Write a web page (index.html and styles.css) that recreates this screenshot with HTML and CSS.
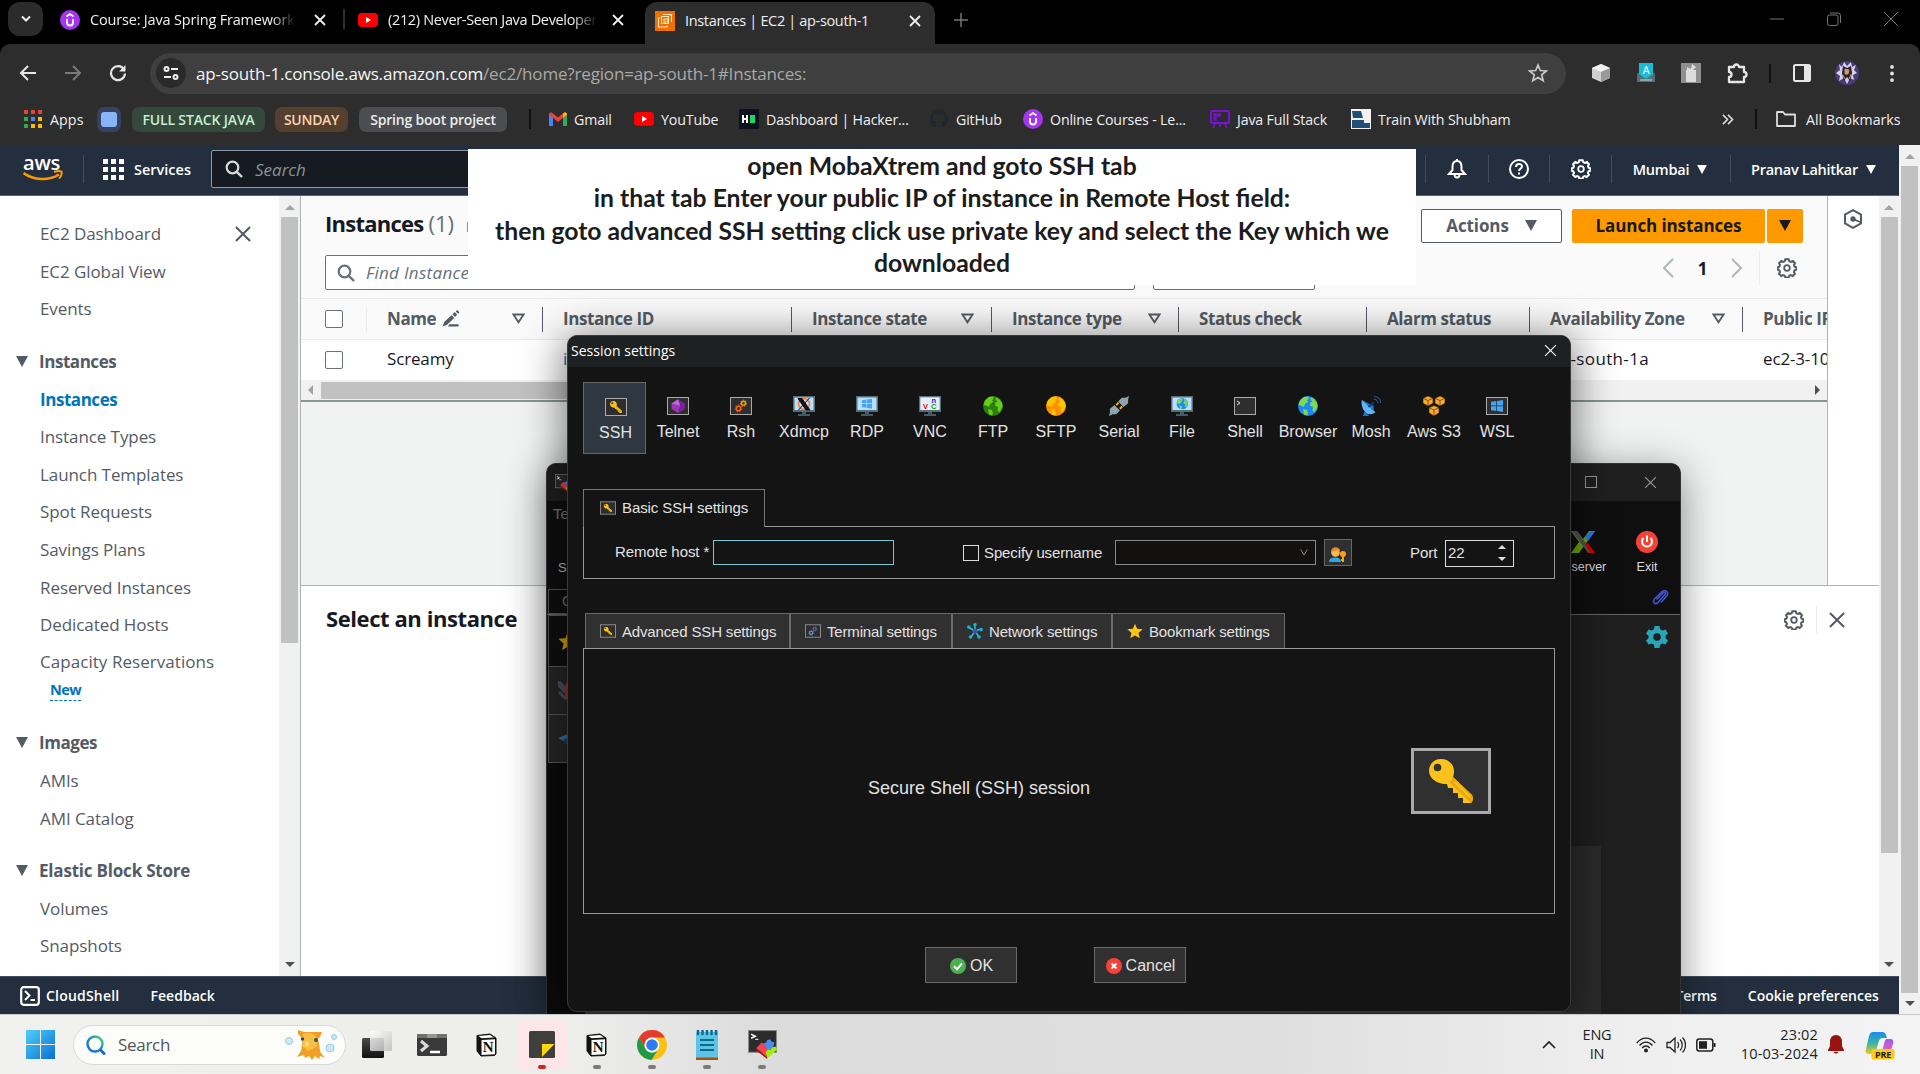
FILE: index.html
```html
<!DOCTYPE html>
<html lang="en">
<head>
<meta charset="utf-8">
<title>Instances | EC2 | ap-south-1</title>
<link rel="stylesheet" href="styles.css">
</head>
<body>
<svg class="defs" aria-hidden="true">
  <defs>
    <linearGradient id="g-win" x1="0" y1="0" x2="1" y2="1"><stop offset="0" stop-color="#4fd0fb"/><stop offset="1" stop-color="#0a6fd0"/></linearGradient>
    <linearGradient id="g-lens" x1="0" y1="1" x2="1" y2="0"><stop offset="0" stop-color="#1667d8"/><stop offset=".6" stop-color="#1499c9"/><stop offset="1" stop-color="#5bd66a"/></linearGradient>
    <linearGradient id="g-cop1" x1="0" y1="0" x2="0" y2="1"><stop offset="0" stop-color="#1b8df0"/><stop offset=".5" stop-color="#35b5a5"/><stop offset="1" stop-color="#f4c91b"/></linearGradient>
    <linearGradient id="g-cop2" x1="0" y1="0" x2="0" y2="1"><stop offset="0" stop-color="#9a5cf5"/><stop offset=".6" stop-color="#e45fb0"/><stop offset="1" stop-color="#ff8a4c"/></linearGradient>
    <linearGradient id="g-glass" x1="0" y1="0" x2="1" y2="1"><stop offset="0" stop-color="#fff"/><stop offset="1" stop-color="#bdbdbd"/></linearGradient>
    <linearGradient id="g-dark" x1="0" y1="0" x2="0" y2="1"><stop offset="0" stop-color="#4a4a4a"/><stop offset="1" stop-color="#111"/></linearGradient>
  </defs>
  <symbol id="x" viewBox="0 0 12 12"><path d="M1 1l10 10M11 1L1 11" stroke="currentColor" fill="none"/></symbol>
  <symbol id="udemy" viewBox="0 0 20 20"><circle cx="10" cy="10" r="10" fill="#a435f0"/><path d="M6.500 6.500L10 4l3.500 2.500M7 9v3.500a3 3 0 0 0 6 0V9" stroke="#fff" stroke-width="1.800" fill="none"/></symbol>
  <symbol id="yt" viewBox="0 0 20 20"><rect y="3" width="20" height="14" rx="4" fill="#f00"/><path d="M8 7v6l5-3z" fill="#fff"/></symbol>
  <symbol id="search" viewBox="0 0 18 18"><circle cx="7.500" cy="7.500" r="5.800" fill="none" stroke="currentColor" stroke-width="2.200"/><path d="M11.800 11.800L17 17" stroke="currentColor" stroke-width="2.400"/></symbol>
  <symbol id="gear" viewBox="0 0 20 20"><path d="M8.300 1.300h3.400l.6 2 1.700.7 1.900-1 2.100 2.200-1 1.900.6 1.600 1.700.6v2.400l-1.700.6-.7 1.700 1 1.900-2.200 2.100-1.900-1-1.500.7-.6 1.900H8.300l-.6-1.900-1.600-.7-1.900 1L2 15.900 3 14l-.7-1.700-1.600-.6V9.300l1.700-.6L3 7.100 2 5.200 4.200 3l1.900 1 1.600-.7z" fill="none" stroke="currentColor" stroke-width="2"/><circle cx="10" cy="10" r="2.800" fill="none" stroke="currentColor" stroke-width="1.800"/></symbol>
  <symbol id="dn" viewBox="0 0 12 11"><path d="M0 0h12L6 11z" fill="currentColor"/></symbol>
  <symbol id="sort" viewBox="0 0 14 11"><path d="M1.500 1.200h11L7 9.500z" fill="none" stroke="currentColor" stroke-width="2"/></symbol>
  <symbol id="key" viewBox="0 0 44 44"><path d="M12 0C19 0 25 5 25 12c0 3-.5 5-1 6L43 36c1.500 3 1 6-1 8h-8v-5h-5v-5h-5v-5h-5l-1-4C10 26 0 20 0 12 0 5 5 0 12 0z" fill="#fcc21c"/><path d="M24 18l19 18c1.500 3 1 6-1 8L21 24z" fill="#e9a80f"/><path d="M26 23l15 15" stroke="#fcc21c" stroke-width="2"/><circle cx="8.500" cy="8.500" r="3.800" fill="#323232"/></symbol>
  <symbol id="framekey" viewBox="0 0 22 18"><rect x=".5" y=".5" width="21" height="17" fill="#2e2e2e" stroke="#aaa"/><use href="#key" x="5" y="3" width="12" height="12"/></symbol>
  <symbol id="cogs" viewBox="0 0 22 18"><rect x=".5" y=".5" width="21" height="17" fill="#2e2e2e" stroke="#aaa"/><g fill="none" stroke="currentColor"><circle cx="8.500" cy="11.500" r="2.200" stroke-width="1.600"/><circle cx="8.500" cy="11.500" r="3.400" stroke-dasharray="1.500 1.500"/></g><g fill="none" stroke="var(--cog2,#ffa000)"><circle cx="13.500" cy="6.200" r="1.900" stroke-width="1.400"/><circle cx="13.500" cy="6.200" r="3" stroke-dasharray="1.300 1.300"/></g></symbol>
  <symbol id="monitor" viewBox="0 0 22 20"><rect width="22" height="16" fill="#546e7a"/><rect x="1.500" y="1.500" width="19" height="12.500" fill="#bbdefb"/><path d="M9 16h4v2h4v2H5v-2h4z" fill="#455a64"/></symbol>
  <symbol id="winlogo" viewBox="0 0 12 12"><path d="M0 1.800L5.300 1v4.600H0zM6 .9L12 0v5.600H6zM0 6.300h5.300V11L0 10.200zM6 6.300h6V12l-6-.9z" fill="#42a5f5"/></symbol>
  <symbol id="globe" viewBox="0 0 20 20"><circle cx="10" cy="10" r="10" fill="var(--sea)"/><path d="M2 4.500l4-3.500 4-.5 1 2-2 1.500 1 2-3 2-1 3-3-1.500-2.500-.5zM13 1.500l3 1.500 3 4 .5 4-3 5-2-1 .5-4-3-1.500.5-3 2-1-2-2zM5 13l4 1 1 3-1 2.500-3-1z" fill="var(--land)"/></symbol>
  <symbol id="star" viewBox="0 0 20 20"><path d="M10 .8l2.700 6.400 6.900.6-5.200 4.600 1.500 6.800L10 15.600l-5.900 3.600 1.500-6.800L.4 7.800l6.900-.6z" fill="currentColor"/></symbol>
  <symbol id="notion" viewBox="0 0 22 24"><path d="M1 2.500L14 1l6 4v16l-1.500 1.500L5 23l-4-5z" fill="#111" stroke="#111"/><path d="M2.500 3L14 2l4 2.500L5.500 5.300z" fill="#fff"/><path d="M5.500 7L19 6.200V21.300L5.500 22z" fill="#fff"/><text x="12.200" y="19" text-anchor="middle" font-family="Liberation Serif,serif" font-weight="700" font-size="15" fill="#111">N</text></symbol>
  <symbol id="moba" viewBox="0 0 28 28"><rect x=".5" y=".5" width="27" height="21" fill="#2c2c2c" stroke="#8a8a8a"/><path d="M3 4l4 2-4 2" stroke="#fff" stroke-width="1.500" fill="none"/><path d="M7 9h3" stroke="#fff"/><path d="M8 17.500L13 12l3 2 2 2 3 4-2.500 6z" fill="#f4444d"/><path d="M14.500 13l3-1 1-2 3-1 1 2 3 1-1 4-4 4-2-1-1-3z" fill="#4b8df0"/><path d="M17 22l2-3 3 0 1-2 4-1 1 3-9 8z" fill="#9ff000"/><path d="M8 17.500l10.500 8.500v2L8 20z" fill="#a01824"/></symbol>
</svg>

<div class="browser">
  <div class="tabstrip">
    <div class="tabmenu"><svg width="12" height="8" viewBox="0 0 12 8"><path d="M2 1.500l4 4 4-4" stroke="#eee" stroke-width="2" fill="none"/></svg></div>
    <div class="tab tab1"><svg class="i20"><use href="#udemy"/></svg><span class="tabtext fade">Course: Java Spring Framework</span><svg class="i12"><use href="#x"/></svg></div>
    <i class="tabsep"></i>
    <div class="tab tab2"><svg class="i20"><use href="#yt"/></svg><span class="tabtext fade">(212) Never-Seen Java Developer</span><svg class="i12"><use href="#x"/></svg></div>
    <div class="tab tab3"><svg class="i20" viewBox="0 0 20 20"><rect width="20" height="20" fill="#ed7100"/><path d="M5 7H3.500v9H12v-1.500M6.500 5.500h7v7h-7zM9 8h3.500v3H9zM15 4h1.500v7M8 3.500h8.500" stroke="#ffe3c4" stroke-width="1.100" fill="none"/></svg><span class="tabtext">Instances | EC2 | ap-south-1</span><svg class="i12"><use href="#x"/></svg></div>
    <svg class="newtab" width="14" height="14" viewBox="0 0 14 14"><path d="M7 0v14M0 7h14" stroke="#777" stroke-width="1.500"/></svg>
    <div class="winctl">
      <svg width="14" height="14" viewBox="0 0 14 14"><path d="M0 7h14" stroke="#777"/></svg>
      <svg width="14" height="14" viewBox="0 0 14 14"><rect x=".5" y="3" width="10.500" height="10.500" rx="2" fill="none" stroke="#777"/><path d="M3 1h8a2.500 2.500 0 0 1 2.500 2.500v7.500" fill="none" stroke="#777"/></svg>
      <svg width="14" height="14" viewBox="0 0 14 14"><path d="M0 0l14 14M14 0L0 14" stroke="#777"/></svg>
    </div>
  </div>
  <div class="toolbar">
    <svg class="nav" viewBox="0 0 18 18"><path d="M17 9H2M9 2L2 9l7 7" stroke="#e6e6e6" stroke-width="2" fill="none"/></svg>
    <svg class="nav" viewBox="0 0 18 18"><path d="M1 9h15M9 2l7 7-7 7" stroke="#7a7a7a" stroke-width="2" fill="none"/></svg>
    <svg class="nav" viewBox="0 0 18 18"><path d="M15 5.500A7 7 0 1 0 16 9.500" stroke="#e6e6e6" stroke-width="2.200" fill="none"/><path d="M16.500 1v6.500H10z" fill="#e6e6e6"/></svg>
    <div class="omnibox">
      <span class="site"><svg width="16" height="16" viewBox="0 0 16 16"><g fill="none" stroke="#eee" stroke-width="2"><circle cx="3.500" cy="4" r="2"/><path d="M8 4h7M1 12h7"/><circle cx="12.500" cy="12" r="2"/></g></svg></span>
      <span class="url"><b>ap-south-1.console.aws.amazon.com</b>/ec2/home?region=ap-south-1#Instances:</span>
      <svg class="bm" viewBox="0 0 20 20"><path d="M10 2l2.300 5.500 6 .5-4.600 3.900 1.500 5.900L10 14.600l-5.200 3.200 1.500-5.900L1.700 8l6-.5z" stroke="#c8c8c8" stroke-width="1.700" fill="none"/></svg>
    </div>
    <div class="ext">
      <svg class="i20" viewBox="0 0 20 20"><path d="M10 1l9 4v10l-9 4-9-4V5z" fill="#cfcfcf"/><path d="M10 1l9 4-9 4-9-4z" fill="#f0f0f0"/><path d="M10 9l9-4v10l-9 4z" fill="#9a9a9a"/></svg>
      <svg class="i20" viewBox="0 0 20 20"><rect x="1" y="10" width="18" height="9" rx="1" fill="#546e7a"/><path d="M3 0h14v11l-7 5-7-5z" fill="#16bcd8"/><text x="10" y="10.500" text-anchor="middle" font-family="Liberation Sans,sans-serif" font-size="10" fill="#fff">A</text><path d="M4 17h12" stroke="#cfd8dc"/></svg>
      <svg class="i20" viewBox="0 0 20 20"><rect width="20" height="20" fill="#8f8f8f"/><path d="M5 7h10v12H5zM6 4l4 2 1-5 4 3-3 3H6z" fill="#ddd"/></svg>
      <svg class="i22" viewBox="0 0 22 22"><path d="M3 5h5a2.500 2.500 0 0 1 5 0h5v5a2.500 2.500 0 0 1 0 5v5H3v-5a2.500 2.500 0 0 0 0-5z" stroke="#e6e6e6" stroke-width="2.300" stroke-linejoin="round" fill="none"/></svg>
      <i class="bar"></i>
      <svg class="i20 side" viewBox="0 0 20 20"><rect x="2" y="2" width="16" height="16" rx="1.500" stroke="#e6e6e6" stroke-width="2" fill="none"/><path d="M12 2h6v16h-6z" fill="#e6e6e6"/></svg>
      <svg class="i24" viewBox="0 0 24 24"><circle cx="12" cy="12" r="12" fill="#4a3c78"/><path d="M4 3l3 3 2-5 3 4 4-4 1 5 4-2-2 5 3 3-4 2 1 5-4-2-3 6-3-6-5 3 1-5-4-3 4-3z" fill="#d8cfe6"/><path d="M8 5l4 2 4-2 1 7-2 8-3-4-3 4-2-8z" fill="#23203a"/><path d="M10 8l4 1-1 4-3 0zM8 14l2 4M16 13l-2 5" fill="#d39a5c" stroke="#d39a5c"/></svg>
      <svg class="dots" viewBox="0 0 4 18"><g fill="#e6e6e6"><circle cx="2" cy="2" r="2"/><circle cx="2" cy="9" r="2"/><circle cx="2" cy="16" r="2"/></g></svg>
    </div>
  </div>
  <div class="bookmarks">
    <span class="bk apps-bk"><svg class="i18" viewBox="0 0 18 18"><g><path d="M0 0h4v4H0zM7 0h4v4H7zM14 0h4v4h-4z" fill="#ea4335"/><path d="M0 7h4v4H0zM0 14h4v4H0z" fill="#34a853"/><path d="M7 7h4v4H7z" fill="#4285f4"/><path d="M14 7h4v4h-4zM14 14h4v4h-4zM7 14h4v4H7z" fill="#fbbc05"/></g></svg>Apps</span>
    <span class="chip cblue"><i></i></span>
    <span class="chip cgreen">FULL STACK JAVA</span>
    <span class="chip cbrown">SUNDAY</span>
    <span class="chip cgray">Spring boot project</span>
    <i class="bar"></i>
    <span class="bk"><svg class="i18" viewBox="0 0 18 14"><path d="M0 1v13h4V6z" fill="#4285f4"/><path d="M18 1v13h-4V6z" fill="#34a853"/><path d="M0 2.500C0 .5 2 0 3.500 1L9 5.500 14.500 1C16 0 18 .5 18 2.500L9 10z" fill="#ea4335"/><path d="M14 1.300l1-.6C17 0 18 1 18 2.500L14 6z" fill="#fbbc04"/></svg>Gmail</span>
    <span class="bk"><svg class="i20"><use href="#yt"/></svg>YouTube</span>
    <span class="bk"><svg class="i20" viewBox="0 0 20 20"><rect width="20" height="20" fill="#0b1220"/><path d="M4 6v8M8 6v8M4 10h4" stroke="#fff" stroke-width="2"/><path d="M11 6h5v8h-5z" fill="#1ed760"/></svg>Dashboard | Hacker...</span>
    <span class="bk"><svg class="i20" viewBox="0 0 20 20"><path d="M10 1a9 9 0 0 0-3 17.500V15c-2 .5-3-1-3.500-2 2 .5 2 1.500 3.500 1 0-1 .5-1.200.5-1.500C3 12 3.500 7 5 6V3.500L7.500 5h5L15 3.500V6c1.500 1 2 6-2.500 6.500.5.500.5 1 .5 2v4A9 9 0 0 0 10 1z" fill="#20262e"/></svg>GitHub</span>
    <span class="bk"><svg class="i20"><use href="#udemy"/></svg>Online Courses - Le...</span>
    <span class="bk"><svg class="i20" viewBox="0 0 20 20"><rect x="1" y="2" width="18" height="12" rx="1" fill="none" stroke="#7a12d4" stroke-width="2"/><path d="M4 5h2v2H4zM8 5h2v2H8zM4 9h2v2H4zM5 15l-2 4M10 15v3M15 15l2 4" fill="#7a12d4" stroke="#7a12d4" stroke-width="1.500"/></svg>Java Full Stack</span>
    <span class="bk"><svg class="i20" viewBox="0 0 20 20"><rect width="20" height="20" fill="#f2f2f2"/><path d="M1 2h9l2 7H2zM1 11h12v8H1zM13 14h6v5h-6z" fill="#1f4e79"/></svg>Train With Shubham</span>
    <svg class="more" viewBox="0 0 12 12"><path d="M1 1l5 5-5 5M6.500 1l5 5-5 5" stroke="#ddd" stroke-width="1.700" fill="none"/></svg>
    <i class="bar"></i>
    <span class="bk all-bk"><svg class="i20" viewBox="0 0 20 20"><path d="M1 3h6l2 2.500h10V17H1z" fill="none" stroke="#ddd" stroke-width="1.800" stroke-linejoin="round"/></svg>All Bookmarks</span>
  </div>

  <div class="page">
    <div class="console">
      <header class="awsbar">
        <svg class="aws" viewBox="0 0 40 26"><text x="0" y="13.500" font-family="Open Sans,sans-serif" font-weight="600" font-size="19" textLength="37" lengthAdjust="spacingAndGlyphs" fill="#fff">aws</text><path d="M.5 17c10 7.500 25 8 35.500 1.500" stroke="#f90" stroke-width="2.600" fill="none"/><path d="M31 16c3-1 6-1.200 7.500-.4 .6 2-.5 5-2.500 7" stroke="#f90" stroke-width="2" fill="none"/></svg>
        <i class="sep"></i>
        <svg class="grid9" viewBox="0 0 21 21"><path d="M0 0h5v5H0zM8 0h5v5H8zM16 0h5v5h-5zM0 8h5v5H0zM8 8h5v5H8zM16 8h5v5h-5zM0 16h5v5H0zM8 16h5v5H8zM16 16h5v5h-5z" fill="#fff"/></svg>
        <span class="services">Services</span>
        <div class="awssearch"><svg class="i18"><use href="#search"/></svg><em>Search</em></div>
        <div class="awsright">
          <span class="cell"><svg class="i20" viewBox="0 0 20 20"><path d="M10 2C6.500 2 5.500 5 5.500 8v3L2 15h16l-3.500-4V8c0-3-1-6-4.500-6zM10 0v2M7.500 15.500c0 4 5 4 5 0" stroke="#fff" stroke-width="2" fill="none"/></svg></span>
          <span class="cell"><svg class="i20" viewBox="0 0 20 20"><circle cx="10" cy="10" r="9" stroke="#fff" stroke-width="2" fill="none"/><path d="M7 8c0-4 6-4 6-.5 0 2-3 2-3 4.500M10 13.500v2" stroke="#fff" stroke-width="2" fill="none"/></svg></span>
          <span class="cell"><svg class="i20"><use href="#gear"/></svg></span>
          <span class="cell region">Mumbai <svg class="i10"><use href="#dn"/></svg></span>
          <span class="cell user">Pranav Lahitkar <svg class="i10"><use href="#dn"/></svg></span>
        </div>
      </header>
      <div class="work">
        <nav class="side-nav">
          <div class="links">
            <a>EC2 Dashboard<svg class="closenav" viewBox="0 0 12 12"><path d="M.7.7l10.600 10.600M11.300.7L.7 11.300" stroke="currentColor" stroke-width="1.500"/></svg></a>
            <a>EC2 Global View</a>
            <a>Events</a>
            <h4><svg class="i12b"><use href="#dn"/></svg>Instances</h4>
            <a class="cur">Instances</a>
            <a>Instance Types</a>
            <a>Launch Templates</a>
            <a>Spot Requests</a>
            <a>Savings Plans</a>
            <a>Reserved Instances</a>
            <a>Dedicated Hosts</a>
            <a class="cap">Capacity Reservations</a>
            <div class="new"><span>New</span></div>
            <h4 class="h-img"><svg class="i12b"><use href="#dn"/></svg>Images</h4>
            <a>AMIs</a>
            <a>AMI Catalog</a>
            <h4 class="h-ebs"><svg class="i12b"><use href="#dn"/></svg>Elastic Block Store</h4>
            <a>Volumes</a>
            <a>Snapshots</a>
          </div>
          <div class="vscroll navscroll"><i class="up"></i><b></b><i class="down"></i></div>
        </nav>
        <main>
          <div class="top">
            <section class="list">
              <div class="listhead">
                <div class="row1">
                  <h2>Instances <span>(1)</span></h2><span class="info">Info</span>
                  <div class="btns"><span class="btn">Actions<svg class="i12b"><use href="#dn"/></svg></span><span class="btn launch">Launch instances</span><span class="btn caret"><svg class="i12b"><use href="#dn"/></svg></span></div>
                </div>
                <div class="row2">
                  <div class="find"><svg class="i18"><use href="#search"/></svg><em>Find Instance by attribute or tag</em></div>
                  <div class="state"></div>
                  <div class="pager">
                    <svg width="12" height="20" viewBox="0 0 12 20"><path d="M11 1L2 10l9 9" stroke="#aab7b8" stroke-width="2" fill="none"/></svg>
                    <b>1</b>
                    <svg width="12" height="20" viewBox="0 0 12 20"><path d="M1 1l9 9-9 9" stroke="#aab7b8" stroke-width="2" fill="none"/></svg>
                    <span class="pg"><svg class="i20"><use href="#gear"/></svg></span>
                  </div>
                </div>
              </div>
              <div class="tr th">
                <span class="light"><i class="cb"></i></span>
                <span>Name <svg class="pencil" viewBox="0 0 18 18"><path d="M0 17.500l2-5 7.500-7 3 3-8 7.500zM10.500 4.500L13 2l2.500 3-2.200 2.300zM14 1.500L15.500 0 18 2.500 16.500 4zM7 15h10v2.500H6z" fill="currentColor"/></svg><svg class="srt"><use href="#sort"/></svg></span>
                <span>Instance ID</span>
                <span>Instance state<svg class="srt"><use href="#sort"/></svg></span>
                <span>Instance type<svg class="srt"><use href="#sort"/></svg></span>
                <span>Status check</span>
                <span>Alarm status</span>
                <span>Availability Zone<svg class="srt"><use href="#sort"/></svg></span>
                <span>Public IPv4</span>
              </div>
              <div class="tr td">
                <span><i class="cb"></i></span>
                <span>Screamy</span><span class="lnk">i-0a</span><span></span><span></span><span></span><span></span><span class="az">ap-south-1a</span><span>ec2-3-108</span>
              </div>
              <div class="hscroll"><i class="left"></i><b></b><i class="right"></i></div>
              <div class="blank"></div>
            </section>
            <aside class="rail"><svg width="20" height="20" viewBox="0 0 20 20"><path d="M10 1.200l8 4.400v8.800l-8 4.400-8-4.400V5.600z" stroke="#545b64" stroke-width="2" fill="none"/><circle cx="10" cy="10" r="2.700" fill="#545b64"/><path d="M10 10l7 3" stroke="#545b64" stroke-width="1.800"/></svg></aside>
          </div>
          <section class="detail"><h2>Select an instance</h2><div class="dt"><svg class="i20"><use href="#gear"/></svg><i></i><svg class="xx" viewBox="0 0 12 12"><path d="M.7.7l10.600 10.600M11.300.7L.7 11.300" stroke="currentColor" stroke-width="1.500"/></svg></div></section>
        </main>
        <div class="vscroll mainscroll"><i class="up"></i><b></b><i class="down"></i></div>
      </div>
      <footer class="awsfoot">
        <svg width="20" height="20" viewBox="0 0 20 20"><rect x="1.200" y="1.200" width="17.600" height="17.600" rx="2.500" stroke="#fff" stroke-width="2.200" fill="none"/><path d="M5 5l4.500 4.500L5 14M10.500 14H15" stroke="#fff" stroke-width="2" fill="none"/></svg>
        <span class="cs">CloudShell</span><span>Feedback</span><span class="terms">Terms</span><span>Cookie preferences</span>
      </footer>
    </div>
    <div class="vscroll pagescroll"><i class="up"></i><b></b><i class="down"></i></div>
  </div>

  <div class="taskbar">
    <svg class="start" viewBox="0 0 29 29"><path d="M0 0h14v14H0zM15 0h14v14H15zM0 15h14v14H0zM15 15h14v14H15z" fill="url(#g-win)"/></svg>
    <div class="tsearch"><svg width="20" height="20" viewBox="0 0 20 20"><circle cx="9" cy="9" r="7.500" fill="none" stroke="url(#g-lens)" stroke-width="2.400"/><path d="M14 14.500l5 5" stroke="#1a63c9" stroke-width="2.600"/></svg><span>Search</span>
      <svg class="pet" width="52" height="32" viewBox="0 0 52 32"><g fill="#cfeaf2" stroke="#9ccbe0"><circle cx="4" cy="12" r="3.500"/><circle cx="45" cy="19" r="4"/><circle cx="49" cy="8" r="2.500"/></g><path d="M13 1l6 2h10l8 0-2 5-2 2c2 6 1 10 3 14l4 5-5-2-1 3-4-3-3 4-3-4-4 2-1-3-7 2 4-6c1-4 1-8 1-13l-4-4z" fill="#f0a023"/><path d="M18 5c5-2 11-1 13 3l1 10-9 4-6-5z" fill="#f9bf45"/><circle cx="17.500" cy="10" r="1.700" fill="#24506b"/><circle cx="31" cy="11" r="1.900" fill="#24506b"/><path d="M20 13l3-1 1 4-3 2z" fill="#ffe07d"/></svg>
    </div>
    <div class="apps">
      <span class="app"><svg width="30" height="30" viewBox="0 0 30 30"><rect x="0" y="8" width="22" height="20" rx="1.500" fill="url(#g-dark)"/><rect x="8" y="1" width="22" height="20" rx="1.500" fill="url(#g-glass)" opacity=".85"/></svg></span>
      <span class="app"><svg width="30" height="24" viewBox="0 0 30 24"><rect y="1" width="30" height="22" rx="1.500" fill="#3a3a3a"/><path d="M0 1h30v4H0z" fill="#707070"/><path d="M10 1h10v4H10z" fill="#959595"/><path d="M4 8l6 5-6 5" stroke="#ddd" stroke-width="3" fill="none"/><path d="M13 19h10" stroke="#fff" stroke-width="2.500"/></svg></span>
      <span class="app"><svg width="22" height="24"><use href="#notion"/></svg></span>
      <span class="app act"><svg width="26" height="27" viewBox="0 0 26 27"><rect width="26" height="27" rx="1.500" fill="#3f3f3f"/><path d="M13 26V13h12.500z" fill="#ffd60a"/></svg></span>
      <span class="app run"><svg width="22" height="24"><use href="#notion"/></svg></span>
      <span class="app run"><svg width="30" height="30" viewBox="0 0 30 30"><circle cx="15" cy="15" r="15" fill="#fbc116"/><path d="M2 7.500A15 15 0 0 1 28 7.500H15A7.500 7.500 0 0 0 8.500 18.700z" fill="#e33b2e"/><path d="M2 7.500A15 15 0 0 0 14.500 30L21.500 18.700A7.500 7.500 0 0 1 8.500 18.700z" fill="#1f9a4b"/><circle cx="15" cy="15" r="7.500" fill="#fff"/><circle cx="15" cy="15" r="5.800" fill="#2d7df0"/></svg></span>
      <span class="app run"><svg width="22" height="30" viewBox="0 0 22 30"><rect y="2" width="22" height="26" rx="1.500" fill="#5cc5e4"/><path d="M0 27.500h22V30H0z" fill="#a5530f"/><path d="M2 0v4M6.500 0v4M11 0v4M15.500 0v4M20 0v4" stroke="#0b6a94" stroke-width="2.500" stroke-linecap="round"/><path d="M4 10h14M4 15h14M4 20h14" stroke="#0b6a94" stroke-width="2"/></svg></span>
      <span class="app run"><svg width="29" height="29"><use href="#moba"/></svg></span>
    </div>
    <div class="tray">
      <svg class="chev" width="14" height="9" viewBox="0 0 14 9"><path d="M1 8l6-6 6 6" stroke="#222" stroke-width="1.700" fill="none"/></svg>
      <span class="lang">ENG<br>IN</span>
      <svg width="20" height="16" viewBox="0 0 20 16"><g fill="none" stroke="#222" stroke-width="1.300"><path d="M.8 6C6-.5 14-.5 19.200 6M3.500 8.500c4-4.500 9-4.500 13 0M6.200 11c2.300-2.700 5.300-2.700 7.600 0"/></g><circle cx="10" cy="13.500" r="2" fill="#222"/></svg>
      <svg width="20" height="18" viewBox="0 0 20 18"><path d="M1 6.500h3L9 2v14l-5-4.500H1z" stroke="#222" stroke-width="1.300" fill="none"/><path d="M11.500 6c1.500 1.500 1.500 4.500 0 6M14 3.500c3 3 3 8 0 11M16.500 1.500c4 4 4 11 0 15" stroke="#222" stroke-width="1.200" fill="none"/></svg>
      <svg width="20" height="14" viewBox="0 0 20 14"><rect x=".8" y="1" width="16" height="12" rx="2.500" stroke="#222" stroke-width="1.500" fill="none"/><path d="M3 3.200h8v7.600H3z" fill="#222"/><path d="M18.500 5v4" stroke="#222" stroke-width="2"/></svg>
      <span class="clock">23:02<br>10-03-2024</span>
      <svg class="bell" width="16" height="19" viewBox="0 0 16 19"><path d="M8 0c4 0 6 3 6 6.500V11l2 4v1H0v-1l2-4V6.500C2 3 4 0 8 0zM5.500 16.800h5c-.5 2.400-4.500 2.400-5 0z" fill="#98150f"/></svg>
      <svg class="cop" width="30" height="30" viewBox="0 0 30 30"><path d="M8 2h9c3 0 4 2 5 6h-4c-3 0-4 2-5 6l-2 7c-1 2-2 3-5 3H4c-3 0-4-2-3-5L4 6c1-3 2-4 4-4z" fill="url(#g-cop1)"/><path d="M21 9h4c3 0 4 2 3 5l-3 9c-1 3-2 4-5 4h-8c3 0 4-2 5-5l2-8c.500-2 1-4 2-5z" fill="url(#g-cop2)"/><rect x="6.500" y="19" width="23" height="10.500" rx="2" fill="#ffc815"/><text x="18" y="27.700" text-anchor="middle" font-family="Open Sans,sans-serif" font-weight="700" font-size="9" fill="#222">PRE</text></svg>
    </div>
  </div>
</div>

<div class="note">open MobaXtrem and goto SSH tab<br>in that tab Enter your public IP of instance in Remote Host field:<br>then goto advanced SSH setting click use private key and select the Key which we<br>downloaded</div>

<div class="win moba">
  <div class="mtitle"><svg class="mi" width="18" height="18"><use href="#moba"/></svg><div class="mctl"><svg width="12" height="12" viewBox="0 0 12 12"><rect x=".5" y=".5" width="11" height="11" fill="none" stroke="#999"/></svg><svg width="13" height="13"><use href="#x"/></svg></div></div>
  <div class="mtop">
    <div class="ml"><span>Terminal</span><span class="ses">Session</span><span class="qc">Quick</span></div>
    <div class="mr">
      <div class="mtools">
        <span class="mt"><svg width="24" height="22" viewBox="0 0 24 22"><path d="M0 0h6l6 8 6-8h6L8 22H0l8-11z" fill="#6aa80d"/><path d="M1 0h5l16 22h-5z" fill="#555"/><path d="M14 6l5-6h5l-7 10z" fill="#2979ff"/><path d="M14 13l3-1 7 10h-5z" fill="#d50000"/></svg>X server</span>
        <span class="mt"><svg width="22" height="22" viewBox="0 0 22 22"><circle cx="11" cy="11" r="11" fill="#f44336"/><path d="M7.500 7a5 5 0 1 0 7 0M11 4.500V11" stroke="#fff" stroke-width="2" fill="none"/></svg>Exit</span>
      </div>
      <svg class="clip" width="17" height="17" viewBox="0 0 17 17"><path d="M4.500 10.500L11 4c2-1.500 3 0 2 1.500L6 13.500c-3 2.500-6-.5-3.500-3.500L9.500 3c3-3 8-.5 5.500 3.500L9 13.500" stroke="#3f51c8" stroke-width="1.700" fill="none"/></svg>
    </div>
  </div>
  <div class="mbody">
    <div class="mtabs"><span class="on"><svg class="i20 star"><use href="#star"/></svg></span><span><svg class="i20" viewBox="0 0 20 20"><path d="M1 1l7 7-2 2-5-6zM1 11l7 7" stroke="#4b4f66" stroke-width="3"/><path d="M9 1c4 0 4 18 0 18-3-5-3-13 0-18z" fill="#a3331b"/></svg></span><span><svg class="i20" viewBox="0 0 20 20"><path d="M0 9l20-8-8 17-5-5z" fill="#3b6f9c"/><path d="M5 11l9-5-6 9z" fill="#1a3f66"/></svg></span></div>
    <div class="mpane"><i></i></div>
    <svg class="mgear" width="22" height="22" viewBox="0 0 22 22"><path d="M8.500 0h5l.6 3.200 2.400 1.300 3-1.100L22 7.600l-2.400 2.100v2.600l2.400 2.100-2.500 4.200-3-1.100-2.400 1.300-.6 3.200h-5L8 18.800l-2.400-1.300-3 1.100L0 14.400l2.500-2.100V9.700L0 7.600l2.600-4.200 3 1.100L8 3.200z" fill="#28a5b8"/><circle cx="11" cy="11" r="3.800" fill="#1f1f1f"/></svg>
  </div>
</div>

<div class="win dialog">
  <div class="dtitle"><span>Session settings</span><svg width="13" height="13"><use href="#x"/></svg></div>
  <div class="dtools">
    <span class="dtool sel"><svg class="ti"><use href="#framekey"/></svg>SSH</span>
    <span class="dtool"><svg class="ti" viewBox="0 0 22 20"><rect x=".5" y="1.500" width="21" height="17" fill="#2e2e2e" stroke="#aaa"/><path d="M11 3.500l6.500 4v5.500L11 17l-6.500-4V7.500z" fill="#9c37b8"/><path d="M11 3.500l2 6-2 7.500 6.500-4V7.500z" fill="#7b1fa2"/><path d="M4.500 7.500L13 9.500 11 3.500z" fill="#c068d8"/></svg>Telnet</span>
    <span class="dtool rsh"><svg class="ti"><use href="#cogs"/></svg>Rsh</span>
    <span class="dtool"><svg class="ti" viewBox="0 0 22 20"><use href="#monitor" width="22" height="20"/><circle cx="11" cy="8" r="5.500" fill="none" stroke="#f47b30" stroke-width="1.500"/><path d="M5 2.500h4L17 14h-4zM16.500 2L5.500 14" stroke="#111" fill="#111"/></svg>Xdmcp</span>
    <span class="dtool"><svg class="ti" viewBox="0 0 22 20"><use href="#monitor" width="22" height="20"/><use href="#winlogo" x="6" y="2.700" width="10" height="10"/></svg>RDP</span>
    <span class="dtool"><svg class="ti" viewBox="0 0 22 20"><use href="#monitor" width="22" height="20"/><rect x="1.500" y="1.500" width="19" height="12.500" fill="#e3f0fb"/><g font-family="Liberation Sans,sans-serif" font-weight="700" font-size="7.500"><text x="4" y="12.500" fill="#e00">V</text><text x="12.500" y="7" fill="#11d">n</text><text x="12" y="13" fill="#0a0">C</text></g></svg>VNC</span>
    <span class="dtool ftp"><svg class="ti"><use href="#globe"/></svg>FTP</span>
    <span class="dtool sftp"><svg class="ti"><use href="#globe"/></svg>SFTP</span>
    <span class="dtool"><svg class="ti" viewBox="0 0 22 22"><path d="M0 22l1-4 0-4 5-4 6 6-4 4-4 0zM22 0l-1 4 0 4-5 4-6-6 4-4 4 0z" fill="#90a4ae"/><path d="M8 10l2.500-2.500M12 14l2.500-2.500" stroke="#ffb300" stroke-width="2.200"/></svg>Serial</span>
    <span class="dtool earth"><svg class="ti" viewBox="0 0 22 20"><use href="#monitor" width="22" height="20"/><use href="#globe" x="5.500" y="2" width="11.500" height="11.500"/></svg>File</span>
    <span class="dtool"><svg class="ti" viewBox="0 0 22 20"><rect x=".5" y="1.500" width="21" height="17" fill="#2e2e2e" stroke="#aaa"/><path d="M3 5l3 2-3 2" stroke="#ddd" fill="none"/></svg>Shell</span>
    <span class="dtool earth brow"><svg class="ti"><use href="#globe"/></svg>Browser</span>
    <span class="dtool"><svg class="ti" viewBox="0 0 22 22"><path d="M1 4l15 14c-4 3-9 3-12-1S0 8 1 4z" fill="#64b5f6"/><path d="M2 5l12 6 0 6zM4 17l5 5H2z" fill="#1976d2"/><path d="M8 12l6-5" stroke="#123e7a" stroke-width="2"/><path d="M14 3.500c3 0 4.500 1.500 4.500 4.500M14.500.7c4.500 0 7 2.500 7 7" stroke="#2f6fae" fill="none"/></svg>Mosh</span>
    <span class="dtool"><svg class="ti" viewBox="0 0 22 20"><g fill="#fba92c" stroke="#3a2400" stroke-width=".6"><path d="M5 0l5 2.300v5L5 10 0 7.300v-5zM17 0l5 2.300v5L17 10l-5-2.700v-5zM11 9.500l5 2.300v5L11 20l-5-3.200v-5z"/><path d="M0 2.300l5 2.200 5-2.200M5 4.500V10M12 2.300l5 2.200 5-2.200M17 4.500V10M6 11.800l5 2.200 5-2.200M11 14v6" fill="none"/></g></svg>Aws S3</span>
    <span class="dtool"><svg class="ti" viewBox="0 0 22 20"><rect x=".5" y="1.500" width="21" height="17" fill="#2e2e2e" stroke="#aaa"/><use href="#winlogo" x="5" y="4" width="12" height="12"/></svg>WSL</span>
  </div>
  <div class="basic">
    <div class="btab"><svg class="si"><use href="#framekey"/></svg>Basic SSH settings</div>
    <div class="bform">
      <label class="rh">Remote host *</label><i class="inp host"></i>
      <i class="chk"></i><label class="su">Specify username</label>
      <i class="inp userbox"><svg width="8" height="7" viewBox="0 0 8 7"><path d="M.7.5L4 6 7.300.5" stroke="#888" fill="none"/></svg></i>
      <span class="ub"><svg width="18" height="17" viewBox="0 0 18 17"><path d="M0 16c0-3 2-4.500 6-4.500S12 13 12 16z" fill="#29a9e0"/><circle cx="6.500" cy="6.500" r="4.300" fill="#ffb74d"/><path d="M2 6c0-6 9-6 9-1L8 4z" fill="#e08a2a"/><circle cx="14" cy="8" r="3" fill="#f9a10c"/><path d="M14 9v7M14 14h-2" stroke="#f9a10c" stroke-width="2"/></svg></span>
      <label class="pt">Port</label><span class="spin">22<svg width="8" height="18" viewBox="0 0 8 18"><path d="M0 5l4-4 4 4zM0 13l4 4 4-4z" fill="#ddd"/></svg></span>
    </div>
  </div>
  <div class="tabs2">
    <span><svg class="si"><use href="#framekey"/></svg>Advanced SSH settings</span>
    <span class="tcog"><svg class="si"><use href="#cogs"/></svg>Terminal settings</span>
    <span><svg class="si" viewBox="0 0 16 16"><path d="M8 8L8 2M8 8l6-2M8 8l4 6M8 8l-4 6M8 8L2 4.500" stroke="#26c6da" stroke-width="1.500"/><g fill="#12b5cf"><circle cx="8" cy="1.800" r="1.800"/><circle cx="14.200" cy="6.500" r="1.800"/><circle cx="12" cy="14" r="1.800"/><circle cx="3.500" cy="14" r="1.800"/><circle cx="1.800" cy="4" r="1.800"/></g><circle cx="8" cy="8.200" r="2.500" fill="#3f51b5"/></svg>Network settings</span>
    <span><svg class="si yel"><use href="#star"/></svg>Bookmark settings</span>
  </div>
  <div class="sshpane"><span class="secure">Secure Shell (SSH) session</span><span class="bigkey"><svg width="44" height="44"><use href="#key"/></svg></span></div>
  <div class="dbtns">
    <span class="db"><svg width="16" height="16" viewBox="0 0 16 16"><circle cx="8" cy="8" r="8" fill="#4caf50"/><path d="M4 8.300l3 3 5-6" stroke="#fff" stroke-width="2" fill="none"/></svg>OK</span>
    <span class="db"><svg width="16" height="16" viewBox="0 0 16 16"><circle cx="8" cy="8" r="8" fill="#f44336"/><path d="M5.500 5.500l5 5M10.500 5.500l-5 5" stroke="#fff" stroke-width="2"/></svg>Cancel</span>
  </div>
</div>
</body>
</html>
```
FILE: styles.css
```css
* { box-sizing: border-box; }
body { margin: 0; width: 1920px; height: 1074px; overflow: hidden; position: relative; background: #000; font-family: "Open Sans", "Noto Sans", sans-serif; }
svg { display: block; flex: none; }
svg.defs { position: absolute; width: 0; height: 0; }
span, label, a, em, h2, h4 { white-space: nowrap; }
i { display: block; flex: none; }
.i10 { width: 10px; height: 9px; }
.i12 { width: 12px; height: 12px; stroke-width: 1.8; }
.i12b { width: 12px; height: 11px; }
.i18 { width: 18px; height: 18px; }
.i20 { width: 20px; height: 20px; }
.i22 { width: 22px; height: 22px; }
.i24 { width: 24px; height: 24px; }

.browser { display: flex; flex-direction: column; width: 1920px; height: 1074px; }

/* tab strip */
.tabstrip { height: 44px; display: flex; align-items: center; color: #f0f0f0; font-size: 14.5px; letter-spacing: -.34px; }
.tabmenu { width: 35px; height: 34px; margin: -6px 0 0 8px; border-radius: 12px; background: #2b2b2b; display: flex; align-items: center; justify-content: center; }
.tab { display: flex; align-items: center; height: 40px; margin-top: -5px; }
.tab .i20 { margin-right: 10px; }
.tab1 { margin-left: 17px; width: 283px; letter-spacing: -.18px; }
.tabsep { width: 2px; height: 20px; background: #2f2f2f; margin-top: -6px; }
.tabtext { flex: none; overflow: hidden; }
.tab1 .tabtext { width: 206px; margin-right: 18px; }
.tab2 { margin-left: 13px; width: 287px; }
.tab2 .tabtext { width: 210px; margin-right: 14px; }
.fade { -webkit-mask-image: linear-gradient(90deg, #000 88%, transparent); mask-image: linear-gradient(90deg, #000 88%, transparent); }
.tab3 { width: 290px; height: 42px; margin-top: 2px; padding: 0 0 5px 10px; background: #2d2d2d; border-radius: 12px 12px 0 0; }
.tab3 .tabtext { width: 224px; }
.newtab { margin: -5px 0 0 19px; }
.winctl { margin: -7px 22px 0 auto; display: flex; gap: 43px; }

/* toolbar */
.toolbar { height: 58px; background: #2d2d2d; border-radius: 10px 10px 0 0; display: flex; align-items: center; padding-left: 19px; }
.nav { width: 18px; height: 18px; margin-right: 27px; }
.nav + .nav + .nav { margin-right: 23px; }
.omnibox { width: 1416px; height: 41px; border-radius: 21px; background: #3f3f3f; display: flex; align-items: center; padding: 0 18px 0 6px; }
.site { width: 30px; height: 30px; border-radius: 50%; background: #2a2a2a; display: flex; align-items: center; justify-content: center; }
.url { margin-left: 10px; font-size: 17px; letter-spacing: -.17px; color: #a9a9a9; flex: 1; }
.url b { font-weight: 400; color: #f5f5f5; }
.bm { width: 20px; height: 20px; }
.ext { flex: 1; display: flex; align-items: center; padding-left: 25px; }
.ext .i20 { margin-right: 25px; }
.ext .i22 { margin-right: 21px; }
.bar { width: 2px; height: 19px; background: #111; }
.ext .side { margin: 0 23px 0 21px; }
.ext .i24 { margin-right: 31px; }
.dots { width: 4px; height: 17px; }

/* bookmarks */
.bookmarks { height: 43px; padding: 0 10px 9px 24px; background: #2d2d2d; display: grid; grid-template-columns: 73px 35px 143px 84px 170px 20px 85px 105px 190px 94px 187px 141px 370px 34px 21px 1fr; align-items: center; color: #f0f0f0; font-size: 14.2px; letter-spacing: -.15px; }
.bk { display: flex; align-items: center; gap: 7px; }
.apps-bk { gap: 8px; letter-spacing: .1px; }
.all-bk { gap: 10px; letter-spacing: 0; }
.chip { height: 25px; border-radius: 7px; display: flex; align-items: center; justify-content: center; font-weight: 600; font-size: 14px; }
.cblue { width: 24px; background: #35435f; }
.cblue i { width: 16px; height: 15px; border-radius: 3px; background: #8ab4f8; }
.cgreen { background: #34493c; color: #c7ecce; width: 133px; letter-spacing: -.15px; }
.cbrown { background: #553f2e; color: #fbd3b0; width: 73px; letter-spacing: -.3px; }
.cgray { background: #4b4d50; color: #ececec; width: 148px; letter-spacing: -.2px; }
.bookmarks .bar { height: 20px; }
.more { width: 13px; height: 11px; }

/* page */
.page { height: 869px; display: flex; }
.console { width: 1899px; display: flex; flex-direction: column; }
.awsbar { height: 51px; background: #232f3e; border-bottom: 1px solid #5a6470; display: flex; align-items: center; padding: 0 0 2px 23px; color: #fff; font-size: 14.5px; font-weight: 600; letter-spacing: -.28px; }
.aws { width: 40px; height: 26px; }
.sep { width: 1px; height: 28px; background: #414d5c; margin: 0 19px 0 20px; }
.grid9 { width: 21px; height: 21px; }
.services { margin-left: 10px; width: 77px; letter-spacing: 0; }
.awssearch { width: 1190px; height: 38px; border: 1px solid #8d99a5; border-radius: 2px; background: #161b22; display: flex; align-items: center; padding-left: 13px; gap: 12px; color: #d5dbdb; font-size: 17px; }
.awssearch em { color: #879596; font-weight: 400; letter-spacing: 0; }
.awsright { margin-left: 24px; display: grid; grid-template-columns: 63px 61px 62px 119px 168px; }
.cell { height: 28px; border-left: 1px solid #414d5c; display: flex; align-items: center; justify-content: center; gap: 8px; }
.region { padding-right: 2px; letter-spacing: -.2px; } .user { padding-right: 2px; }

.work { height: 780px; display: flex; }
.side-nav { width: 301px; display: flex; background: #fff; border-right: 1px solid #aab7b8; }
.links { width: 279px; height: 780px; overflow: hidden; padding-top: 19px; color: #545b64; font-size: 17px; letter-spacing: -.08px; }
.links a { display: flex; height: 37.6px; align-items: center; padding-left: 40px; }
.links .cap { letter-spacing: .05px; height: 36.5px; }
.closenav { width: 16px; height: 16px; margin-left: auto; margin-right: 28px; }
.links h4 { margin: 15px 0 0; height: 37.6px; display: flex; align-items: center; padding-left: 16px; gap: 11px; font-size: 17px; letter-spacing: -.45px; font-weight: 700; }
.links .h-ebs { letter-spacing: -.2px; }
.links .cur { color: #0073bb; font-weight: 700; letter-spacing: -.45px; }
.new { padding-left: 50px; height: 27px; margin-top: 0; color: #0073bb; font-weight: 700; font-size: 14.5px; letter-spacing: -.6px; line-height: 20px; }
.new span { display: inline-block; border-bottom: 1px dashed #0073bb; }
.links .h-img { margin-top: 17px; }
.vscroll { display: flex; flex-direction: column; align-items: center; background: #f1f1f1; }
.vscroll b { background: #c1c1c1; width: 17px; }
.up { border: 5px solid transparent; border-top: 0; border-bottom: 5px solid #a3a3a3; margin: 9px 0 7px; }
.down { border: 5px solid transparent; border-bottom: 0; border-top: 5px solid #505050; margin: auto 0 9px; }
.navscroll { width: 21px; } .navscroll b { height: 426px; }
.mainscroll { width: 20px; } .mainscroll b { height: 636px; }
.pagescroll { width: 21px; } .pagescroll b { height: 827px; }
.pagescroll .down { margin-bottom: 8px; }

main { width: 1578px; background: #fff; display: flex; flex-direction: column; }
.top { height: 389px; display: flex; }
.list { width: 1527px; border-right: 1px solid #aab7b8; overflow: hidden; display: flex; flex-direction: column; background: #f1f3f3; }
.listhead { height: 103px; background: #fafafa; border-bottom: 1px solid #eaeded; padding: 13px 24px 0 24px; flex: none; }
.row1 { display: flex; height: 34px; align-items: center; }
h2 { margin: 0; font-size: 22px; letter-spacing: -.75px; color: #16191f; font-weight: 700; }
.row1 h2 { margin-top: -6px; }
.row1 h2 span { color: #687078; font-weight: 400; letter-spacing: 0; }
.info { margin-left: 12px; color: #0073bb; font-size: 14px; font-weight: 700; }
.btns { margin-left: auto; display: flex; }
.btn { height: 34px; display: flex; align-items: center; justify-content: center; font-weight: 700; font-size: 17px; letter-spacing: -.1px; border-radius: 2px; padding-bottom: 2px; }
.btn:first-child { width: 141px; border: 1px solid #545b64; background: #fff; color: #545b64; gap: 16px; margin-right: 10px; }
.launch { width: 193px; background: #f90; color: #16191f; margin-right: 2px; }
.caret { width: 36px; background: #f90; color: #16191f; }
.row2 { display: flex; align-items: flex-start; }
.find { margin-top: 12px; width: 810px; height: 35px; border: 1px solid #687078; border-radius: 2px; background: #fff; display: flex; align-items: center; gap: 11px; padding-left: 11px; color: #687078; font-size: 17px; letter-spacing: .3px; }
.state { margin: 12px 0 0 18px; width: 162px; height: 35px; border: 1px solid #687078; border-radius: 2px; background: #fff; }
.pager { margin: 8px 6px 0 auto; display: flex; align-items: center; height: 34px; font-size: 17px; color: #16191f; }
.pager b { width: 57px; text-align: center; }
.pg { height: 34px; border-left: 1px solid #eaeded; margin-left: 16px; padding-left: 17px; display: flex; align-items: center; color: #545b64; }
.tr { display: grid; grid-template-columns: 66px 176px 249px 200px 187px 188px 163px 213px 86px; align-items: center; flex: none; }
.tr > span { overflow: hidden; display: flex; align-items: center; padding-left: 20px; }
.tr > span:first-child { padding-left: 24px; }
.th { height: 41px; background: #fafafa; border-bottom: 1px solid #eaeded; font-size: 17px; letter-spacing: -.42px; font-weight: 700; color: #545b64; }
.th > span { height: 25px; border-right: 1px solid #545b64; padding-bottom: 2px; }
.th > span.light { border-right-color: #eaeded; padding-bottom: 0; }
.th > span:last-child { border: 0; }
.td { height: 40px; background: #fff; font-size: 17px; letter-spacing: -.15px; color: #16191f; }
.td > span:not(:first-child) { padding-bottom: 3px; }
.td .az { letter-spacing: .35px; }
.lnk { color: #0073bb; }
.cb { width: 18px; height: 18px; border: 1.5px solid #687078; border-radius: 2px; background: #fff; }
.pencil { width: 18px; height: 17px; margin-left: 6px; }
.srt { width: 13px; height: 11px; margin-left: auto; margin-right: 17px; }
.hscroll { height: 22px; background: #f1f1f1; border-bottom: 2px solid #879596; display: flex; align-items: center; }
.hscroll b { width: 1050px; height: 17px; background: #c1c1c1; }
.left { border: 5px solid transparent; border-left: 0; border-right-color: #a3a3a3; margin: 0 8px 0 7px; }
.right { border: 5px solid transparent; border-right: 0; border-left-color: #505050; margin: 0 7px 0 auto; }
.rail { flex: 1; padding: 13px 0 0 15px; }
.detail { flex: 1; border-top: 1px solid #aab7b8; display: flex; justify-content: space-between; padding: 18px 34px 0 25px; align-items: flex-start; }
.detail h2 { margin-top: -1px; letter-spacing: -.42px; }
.dt { display: flex; align-items: center; color: #545b64; height: 31px; }
.dt i { width: 1px; height: 29px; background: #eaeded; margin: 0 12px 0 12px; }
.xx { width: 16px; height: 16px; }
.awsfoot { height: 38px; background: #232f3e; border-top: 1px solid #414d5c; display: flex; align-items: center; padding: 0 20px; color: #fff; font-size: 14px; font-weight: 600; letter-spacing: .05px; }
.cs { margin: 0 31px 0 6px; letter-spacing: .2px; }
.terms { margin: 0 31px 0 auto; letter-spacing: -.2px; }

/* taskbar */
.taskbar { height: 60px; background: linear-gradient(90deg, #f1f1ef 0, #ededec 30%, #dcdcdc 40%, #dedede 65%, #efefef 85%, #f3f3f3); border-top: 1px solid #c9c9c9; display: flex; align-items: center; padding-left: 26px; color: #222; }
.start { width: 29px; height: 29px; }
.tsearch { margin-left: 18px; width: 273px; height: 40px; border-radius: 20px; background: #fcfcfb; border: 1px solid #d9d9d7; display: flex; align-items: center; padding-left: 12px; font-size: 17px; letter-spacing: -.3px; color: #555; }
.tsearch span { margin-left: 12px; flex: 1; }
.pet { margin-right: 8px; }
.apps { display: flex; margin-left: 6px; gap: 5px; }
.app { width: 50px; height: 50px; border-radius: 5px; display: flex; align-items: center; justify-content: center; position: relative; }
.act { background: #fde6e8; }
.act::after, .run::after { content: ""; position: absolute; bottom: 1px; left: 21px; width: 8px; height: 4px; border-radius: 2px; background: #7b7b7b; }
.act::after { background: #c42b1c; }
.tray { margin-left: auto; display: flex; align-items: center; padding-right: 26px; font-size: 14.500px; letter-spacing: -.2px; line-height: 19px; gap: 10px; }
.lang { text-align: center; margin: -2px 13px 0 15px; }
.clock { text-align: right; margin: -2px 0 0 6px; width: 86px; letter-spacing: .15px; }
.chev + .lang { width: 32px; }
.cop { margin-left: 11px; margin-right: -1px; }

/* instruction banner laid over the console */
.note { position: absolute; left: 468px; top: 149px; width: 948px; height: 136px; background: #fff; color: #1c1c1c; font: 700 24.75px/32.4px Lato, sans-serif; text-align: center; padding-top: 1px; }

/* desktop windows */
.win { position: absolute; overflow: hidden; }
.moba { left: 546px; top: 463px; width: 1135px; height: 551px; border-radius: 10px 10px 0 0; background: #0f0f0f; box-shadow: 0 8px 40px rgba(0,0,0,.45); border: 1px solid #333; border-bottom: 0; color: #ddd; font-family: "Liberation Sans", sans-serif; clip-path: inset(-60px -60px 0 -60px); }
.mtitle { height: 37px; background: #1f1f1f; display: flex; align-items: center; justify-content: space-between; padding: 0 23px 0 8px; }
.mctl { display: flex; align-items: center; gap: 47px; color: #999; margin-top: -1px; }
.mtop { height: 114px; display: flex; justify-content: space-between; border-bottom: 1px solid #666; font-size: 13px; }
.ml { display: flex; flex-direction: column; width: 120px; }
.ml span { padding-left: 6px; color: #777; font-size: 15px; margin-top: 4px; }
.ml .ses { font-size: 13px; color: #bbb; margin-top: 38px; padding-left: 11px; }
.ml .qc { height: 25px; border: 1px solid #555; margin: 14px 0 0 1px; line-height: 22px; padding-left: 13px; }
.mr { width: 130px; display: flex; flex-direction: column; align-items: flex-end; padding-right: 11px; }
.mtools { display: flex; margin-top: 30px; gap: 20px; font-size: 12.500px; }
.mt { display: flex; flex-direction: column; align-items: center; gap: 7px; width: 44px; }
.clip { margin-top: 15px; }
.mbody { height: 400px; display: grid; grid-template-columns: 38px 1016px 1fr; background: linear-gradient(90deg, #0b0b0b 0 800px, #1f1f1f 800px); }
.mtabs { padding-left: 1px; }
.mtabs span { display: flex; align-items: center; height: 48px; border: 1px solid #555; border-top-width: 0; padding-left: 9px; background: #262626; }
.mtabs .on { height: 52px; background: #0f0f0f; border-top-width: 1px; }
.star { color: #d2a40a; }
.mpane { margin-top: 231px; height: 169px; background: #2b2b2b; display: flex; align-items: flex-end; }
.mpane i { width: 360px; height: 169px; }
.mgear { margin: 11px 0 0 45px; }

.dialog { left: 567px; top: 335px; width: 1004px; height: 677px; border-radius: 10px; background: #141414; border: 1px solid #3a3a3a; box-shadow: 0 6px 42px 4px rgba(0,0,0,.5); clip-path: inset(-60px -60px 0 -60px); color: #e2e2e2; font: 15px "Liberation Sans", sans-serif; }
.dtitle { height: 31px; background: #1e2122; display: flex; align-items: center; justify-content: space-between; padding: 0 13px 2px 3px; color: #fff; font: 14px "Open Sans", sans-serif; letter-spacing: .02px; }
.dtools { margin: 15px 0 0 15px; display: flex; font-size: 16px; }
.dtool { width: 63px; height: 72px; display: flex; flex-direction: column; align-items: center; padding: 14px 0 0 1px; gap: 7px; }
.dtool.sel { background: #2f3840; border: 1px solid #686868; padding-left: 2px; }
.ti { width: 22px; height: 20px; }
.rsh .ti { color: #f4600c; --cog2: #ffa000; }
.ftp { --sea: #2e7d12; --land: #62cf10; } .sftp { --sea: #ff8f00; --land: #ffc400; } .earth { --sea: #1e88f5; --land: #7ed957; }
.basic { margin: 35px 15px 0 15px; }
.btab { width: 182px; height: 38px; border: 1px solid #777; border-bottom: 0; display: flex; align-items: center; padding: 0 0 2px 16px; gap: 6px; position: relative; z-index: 1; background: #141414; margin-bottom: -1px; letter-spacing: -.08px; }
.si { width: 16px; height: 16px; }
.bform { height: 53px; border: 1px solid #999; display: flex; align-items: center; padding-left: 31px; letter-spacing: -.05px; }
.rh { width: 98px; margin-top: -2px; }
.inp { height: 25px; border: 1px solid #888; }
.host { width: 181px; border-color: #7cc6d8; margin-right: 69px; }
.chk { width: 16px; height: 16px; border: 1px solid #ddd; margin-right: 5px; }
.su { width: 131px; letter-spacing: -.12px; }
.userbox { width: 201px; display: flex; align-items: center; justify-content: flex-end; padding-right: 7px; background: #12110f; margin-right: 8px; }
.ub { width: 28px; height: 27px; border: 1px solid #666; background: #2f2f2f; display: flex; align-items: center; justify-content: center; margin-right: 58px; padding-top: 3px; }
.pt { width: 35px; }
.spin { width: 69px; height: 27px; border: 1px solid #ddd; display: flex; justify-content: space-between; align-items: center; padding: 0 7px 0 2px; margin-top: 1px; line-height: 20px; }
.tabs2 { margin: 34px 0 0 17px; display: flex; }
.tabs2 span { height: 35px; border: 1px solid #6a6a6a; border-bottom: 0; background: #303030; display: flex; align-items: center; gap: 6px; padding-left: 14px; letter-spacing: -.16px; }
.tabs2 span:nth-child(1) { width: 205px; } .tabs2 span:nth-child(2) { width: 162px; } .tabs2 span:nth-child(3) { width: 160px; } .tabs2 span:nth-child(4) { width: 173px; }
.tcog .si { color: #5c9be0; --cog2: #5c6bc0; }
.yel { color: #fcc419; }
.sshpane { margin: 0 15px; height: 266px; border: 1px solid #999; display: flex; align-items: center; padding-left: 284px; font-size: 18px; }
.secure { width: 543px; margin-top: 14px; }
.bigkey { width: 80px; height: 66px; border: 3px solid #aaa; background: #303030; display: flex; align-items: center; justify-content: center; }
.dbtns { display: flex; gap: 77px; margin: 33px 0 0 357px; font-size: 16px; }
.db { width: 92px; height: 36px; border: 1px solid #6a6a6a; background: #303030; display: flex; align-items: center; justify-content: center; gap: 4px; padding: 1px 0 0 1px; }
```
